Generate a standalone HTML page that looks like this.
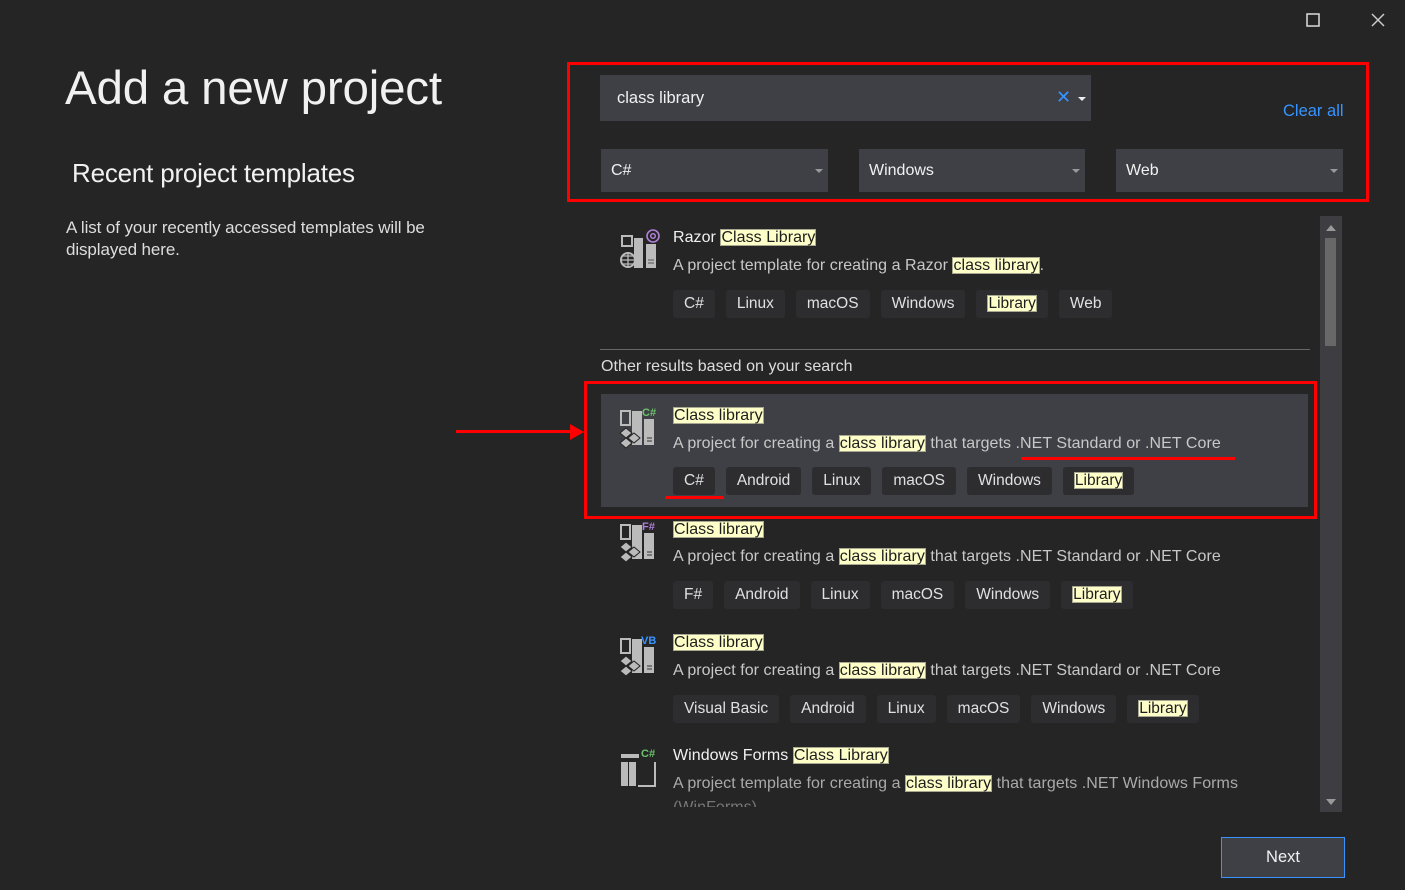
<!DOCTYPE html>
<html><head><meta charset="utf-8"><style>
*{margin:0;padding:0;box-sizing:border-box}
body{width:1405px;height:890px;background:#252526;font-family:"Liberation Sans",sans-serif;color:#f1f1f1;position:relative;overflow:hidden}
.a{position:absolute;white-space:nowrap}
.t{font-size:16px;letter-spacing:0.05px}
.d{color:#c8c8c8}
.hl{background:#fefec8;color:#1e1e1e;box-shadow:0 0 0 1px #a8a890 inset;padding:0 1px}
.tags{display:flex;gap:11px}
.tag{height:28px;line-height:28px;padding:0 11px;background:#2d2d30;border-radius:3px;font-size:15.5px;color:#e0e0e0}
.tag .hl{padding:0 1px}
.dd{position:absolute;height:43px;background:#3f3f46;font-size:16px;line-height:43px;padding-left:10px;color:#f1f1f1}
.dd:after{content:"";position:absolute;right:5px;top:20px;border:4px solid transparent;border-top:4px solid #999}
.red{position:absolute;border:3px solid #f00}
</style></head><body>
<svg class="a" style="left:1306px;top:13px" width="14" height="14"><rect x="1" y="1" width="12" height="12" fill="none" stroke="#ddd" stroke-width="1.5"/></svg>
<svg class="a" style="left:1371px;top:13px" width="14" height="14"><path d="M1 1L13 13M13 1L1 13" stroke="#ccc" stroke-width="1.5"/></svg>

<div class="a" style="left:65px;top:61px;font-size:47.5px;letter-spacing:-0.2px">Add a new project</div>
<div class="a" style="left:72px;top:158px;font-size:26px;letter-spacing:-0.2px">Recent project templates</div>
<div class="a" style="left:66px;top:217px;font-size:17px;line-height:22px;color:#ddd;white-space:normal;width:380px;letter-spacing:-0.1px">A list of your recently accessed templates will be displayed here.</div>

<div class="a" style="left:600px;top:75px;width:491px;height:46px;background:#3f3f46"></div>
<div class="a" style="left:617px;top:89px;font-size:16.5px">class library</div>
<div class="a" style="left:1056px;top:87px;font-size:18px;color:#3794ff">✕</div>
<div class="a" style="left:1078px;top:97px;border:4px solid transparent;border-top:4px solid #eee"></div>
<div class="a" style="left:1283px;top:102px;font-size:16.5px;color:#3794ff">Clear all</div>
<div class="dd" style="left:601px;top:149px;width:227px">C#</div>
<div class="dd" style="left:859px;top:149px;width:226px">Windows</div>
<div class="dd" style="left:1116px;top:149px;width:227px">Web</div>
<div class="red" style="left:567px;top:62px;width:802px;height:140px"></div>

<div class="a" style="left:1320px;top:216px;width:22px;height:596px;background:#3e3e42"></div>
<div class="a" style="left:1325px;top:238px;width:11px;height:108px;background:#686868"></div>
<div class="a" style="left:1326px;top:225px;border:5px solid transparent;border-bottom:6px solid #999;border-top:0"></div>
<div class="a" style="left:1326px;top:799px;border:5px solid transparent;border-top:6px solid #999;border-bottom:0"></div>

<!-- item 1 -->
<svg class="a" style="left:618px;top:228px" width="44" height="44"><rect x="4" y="8" width="10" height="10" fill="none" stroke="#bbb" stroke-width="2"/><rect x="16" y="10" width="9" height="30" fill="#bbb"/><rect x="28" y="16" width="10" height="24" fill="#bbb"/><path d="M30 32h6M30 35h6" stroke="#555"/><circle cx="10" cy="32" r="7" fill="#252526" stroke="#bbb" stroke-width="2"/><path d="M3 32H17M10 25V39M5 28h10M5 36h10" stroke="#bbb" stroke-width="1.3"/><circle cx="35" cy="8" r="6" fill="none" stroke="#b180d7" stroke-width="1.6"/><circle cx="35" cy="8" r="2.3" fill="none" stroke="#b180d7" stroke-width="1.5"/></svg>
<div class="a t" style="left:673px;top:229px">Razor <span class="hl">Class Library</span></div>
<div class="a t d" style="left:673px;top:257px">A project template for creating a Razor <span class="hl">class library</span>.</div>
<div class="a tags" style="left:673px;top:290px"><span class="tag">C#</span><span class="tag">Linux</span><span class="tag">macOS</span><span class="tag">Windows</span><span class="tag"><span class="hl">Library</span></span><span class="tag">Web</span></div>
<div class="a" style="left:600px;top:349px;width:710px;height:1px;background:#666"></div>
<div class="a t" style="left:601px;top:358px;color:#ddd">Other results based on your search</div>

<!-- item 2 selected -->
<div class="a" style="left:601px;top:394px;width:707px;height:113px;background:#3f3f46"></div>
<svg class="a" style="left:618px;top:405px" width="44" height="44"><rect x="3" y="6" width="9" height="14" fill="none" stroke="#bbb" stroke-width="2"/><rect x="14" y="6" width="10" height="34" fill="#bbb"/><rect x="26" y="14" width="10" height="26" fill="#bbb"/><path d="M29 33h5M29 36h5" stroke="#333"/><path d="M2 28l6-5 6 5-6 5zM2 38l6-5 6 5-6 5zM10 33l6-5 6 5-6 5z" fill="#bbb" stroke="#252526"/><text x="24" y="11" font-size="11" font-weight="bold" fill="#6bc46b">C#</text></svg>
<div class="a t" style="left:673px;top:407px"><span class="hl">Class library</span></div>
<div class="a t d" style="left:673px;top:435px">A project for creating a <span class="hl">class library</span> that targets .NET Standard or .NET Core</div>
<div class="a tags" style="left:673px;top:467px"><span class="tag">C#</span><span class="tag">Android</span><span class="tag">Linux</span><span class="tag">macOS</span><span class="tag">Windows</span><span class="tag"><span class="hl">Library</span></span></div>
<div class="red" style="left:584px;top:381px;width:733px;height:138px"></div>
<div class="a" style="left:1021px;top:457px;width:214px;height:3px;background:#f00"></div>
<div class="a" style="left:665px;top:496px;width:59px;height:3px;background:#f00"></div>
<div class="a" style="left:456px;top:430px;width:118px;height:3px;background:#f00"></div>
<div class="a" style="left:570px;top:424px;border:8px solid transparent;border-left:14px solid #f00;border-right:0"></div>

<!-- item 3 -->
<svg class="a" style="left:618px;top:519px" width="44" height="44"><rect x="3" y="6" width="9" height="14" fill="none" stroke="#bbb" stroke-width="2"/><rect x="14" y="6" width="10" height="34" fill="#bbb"/><rect x="26" y="14" width="10" height="26" fill="#bbb"/><path d="M29 33h5M29 36h5" stroke="#333"/><path d="M2 28l6-5 6 5-6 5zM2 38l6-5 6 5-6 5zM10 33l6-5 6 5-6 5z" fill="#bbb" stroke="#252526"/><text x="24" y="11" font-size="11" font-weight="bold" fill="#b180d7">F#</text></svg>
<div class="a t" style="left:673px;top:521px"><span class="hl">Class library</span></div>
<div class="a t d" style="left:673px;top:548px">A project for creating a <span class="hl">class library</span> that targets .NET Standard or .NET Core</div>
<div class="a tags" style="left:673px;top:581px"><span class="tag">F#</span><span class="tag">Android</span><span class="tag">Linux</span><span class="tag">macOS</span><span class="tag">Windows</span><span class="tag"><span class="hl">Library</span></span></div>

<!-- item 4 -->
<svg class="a" style="left:618px;top:633px" width="44" height="44"><rect x="3" y="6" width="9" height="14" fill="none" stroke="#bbb" stroke-width="2"/><rect x="14" y="6" width="10" height="34" fill="#bbb"/><rect x="26" y="14" width="10" height="26" fill="#bbb"/><path d="M29 33h5M29 36h5" stroke="#333"/><path d="M2 28l6-5 6 5-6 5zM2 38l6-5 6 5-6 5zM10 33l6-5 6 5-6 5z" fill="#bbb" stroke="#252526"/><text x="23" y="11" font-size="11" font-weight="bold" fill="#3794ff">VB</text></svg>
<div class="a t" style="left:673px;top:634px"><span class="hl">Class library</span></div>
<div class="a t d" style="left:673px;top:662px">A project for creating a <span class="hl">class library</span> that targets .NET Standard or .NET Core</div>
<div class="a tags" style="left:673px;top:695px"><span class="tag">Visual Basic</span><span class="tag">Android</span><span class="tag">Linux</span><span class="tag">macOS</span><span class="tag">Windows</span><span class="tag"><span class="hl">Library</span></span></div>

<!-- item 5 -->
<svg class="a" style="left:618px;top:746px" width="44" height="44"><path d="M3 8h18v4H3z" fill="#bbb"/><path d="M37 16v24H20" fill="none" stroke="#bbb" stroke-width="2"/><rect x="3" y="16" width="7" height="24" fill="#bbb"/><rect x="11" y="16" width="7" height="24" fill="#bbb"/><text x="23" y="11" font-size="11" font-weight="bold" fill="#6bc46b">C#</text></svg>
<div class="a t" style="left:673px;top:747px">Windows Forms <span class="hl">Class Library</span></div>
<div class="a t d" style="left:673px;top:775px;color:#aaa">A project template for creating a <span class="hl">class library</span> that targets .NET Windows Forms</div>
<div class="a t" style="left:673px;top:799px;height:8px;overflow:hidden;color:#777">(WinForms)</div>

<div class="a" style="left:1221px;top:837px;width:124px;height:41px;background:#3f3f46;border:1px solid #3794ff;text-align:center;line-height:39px;font-size:16.5px">Next</div>
</body></html>
